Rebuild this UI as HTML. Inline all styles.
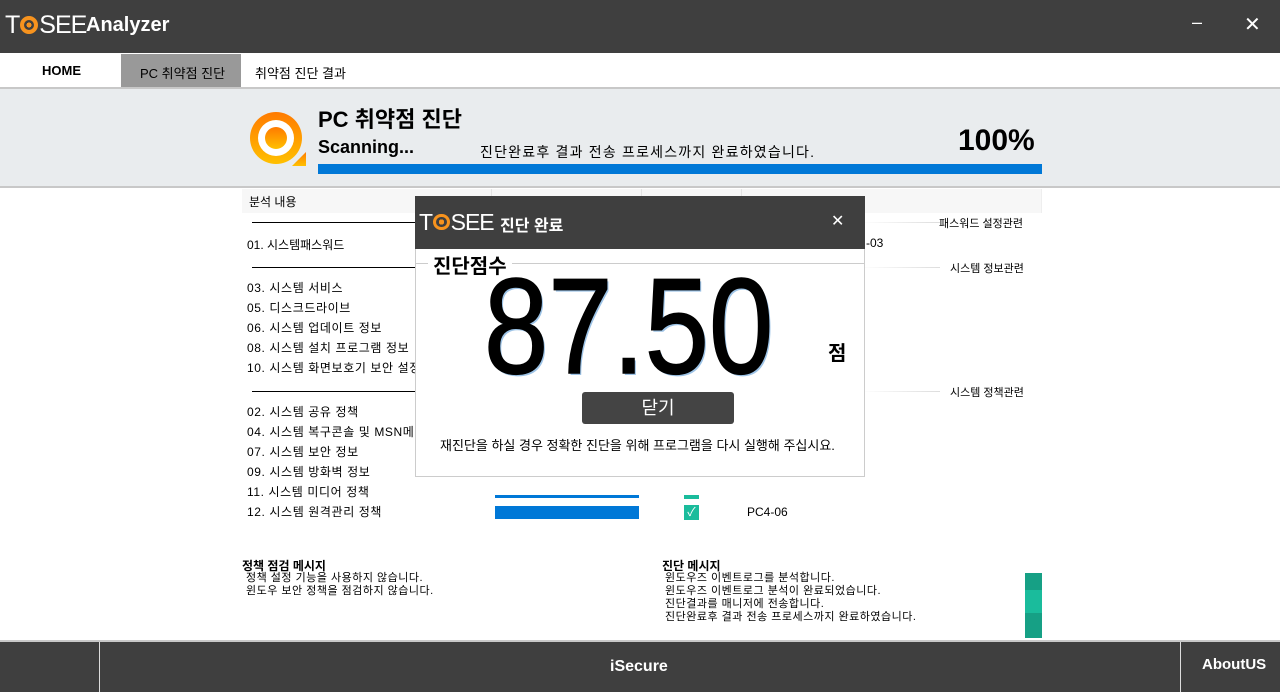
<!DOCTYPE html>
<html><head><meta charset="utf-8"><style>
*{margin:0;padding:0;box-sizing:border-box}
body{width:1280px;height:692px;overflow:hidden;position:relative;background:#fff;font-family:"Liberation Sans","Noto Sans CJK KR",sans-serif;color:#000}
.a{position:absolute;white-space:nowrap}
.t{font-size:12px}
.q{display:inline-block;width:0.72em;height:0.72em;border-radius:50%;border:0.16em solid #f7931e;background:radial-gradient(circle,#f7931e 0 35%,transparent 36%);vertical-align:-0.02em;margin:0 1px}
.line{position:absolute;height:1px;background:#000}
.fl{position:absolute;height:1px;background:linear-gradient(90deg,#fff,#ddd)}
</style></head><body>
<div class="a" style="left:0;top:0;width:1280px;height:53px;background:#3f3f3f"></div>
<div class="a" style="left:5px;top:11px;color:#fff;font-size:25px;letter-spacing:-1px">T<span class="q"></span>SEE</div>
<div class="a" style="left:86px;top:14px;color:#fff;font-size:20px;font-weight:bold">Analyzer</div>
<div class="a" style="left:1192px;top:12px;color:#fff;font-size:18px">–</div>
<div class="a" style="left:1244px;top:12px;color:#fff;font-size:20px">✕</div>
<div class="a" style="left:121px;top:54px;width:120px;height:33px;background:#999"></div>
<div class="a" style="left:42px;top:63px;font-size:13px;font-weight:bold">HOME</div>
<div class="a" style="left:140px;top:63px;font-size:13px">PC 취약점 진단</div>
<div class="a" style="left:255px;top:63px;font-size:13px">취약점 진단 결과</div>
<div class="a" style="left:0;top:87px;width:1280px;height:101px;background:#e9ecee;border-top:2px solid #c8c8c8;border-bottom:2px solid #c8c8c8"></div>
<svg class="a" style="left:248px;top:110px" width="60" height="58" viewBox="0 0 60 58"><defs><linearGradient id="g" x1="0" y1="0" x2="0" y2="1"><stop offset="0" stop-color="#ff7a00"/><stop offset="1" stop-color="#ffc000"/></linearGradient></defs><circle cx="28" cy="28" r="26" fill="url(#g)"/><circle cx="28" cy="28" r="18" fill="#fff"/><circle cx="28" cy="28" r="11" fill="url(#g)"/><polygon points="44,56 58,42 58,56" fill="url(#g)"/></svg>
<div class="a" style="left:318px;top:102px;font-size:22px;font-weight:bold">PC 취약점 진단</div>
<div class="a" style="left:318px;top:137px;font-size:18px;font-weight:bold">Scanning...</div>
<div class="a" style="left:480px;top:142px;font-size:14px;letter-spacing:1.2px">진단완료후 결과 전송 프로세스까지 완료하였습니다.</div>
<div class="a" style="left:958px;top:124px;font-size:30px;font-weight:bold">100%</div>
<div class="a" style="left:318px;top:164px;width:724px;height:10px;background:#0078d7"></div>
<div class="a" style="left:242px;top:189px;width:800px;height:24px;background:#f7f7f7;border-right:1px solid #eee"></div>
<div class="a" style="left:491px;top:189px;width:1px;height:24px;background:#e4e4e4"></div>
<div class="a" style="left:641px;top:189px;width:1px;height:24px;background:#e4e4e4"></div>
<div class="a" style="left:741px;top:189px;width:1px;height:24px;background:#e4e4e4"></div>
<div class="a t" style="left:249px;top:193px">분석 내용</div>
<div class="line" style="left:252px;top:222px;width:170px"></div><div class="fl" style="left:860px;top:222px;width:80px"></div>
<div class="a t" style="left:939px;top:215px;font-size:11px">패스워드 설정관련</div>
<div class="a t" style="left:247px;top:236px">01. 시스템패스워드</div>
<div class="a t" style="left:866px;top:236px">-03</div>
<div class="line" style="left:252px;top:267px;width:170px"></div><div class="fl" style="left:860px;top:267px;width:80px"></div>
<div class="a t" style="left:950px;top:260px;font-size:11px">시스템 정보관련</div>
<div class="a t" style="left:247px;top:278px;line-height:20px;letter-spacing:0.6px">03. 시스템 서비스<br>05. 디스크드라이브<br>06. 시스템 업데이트 정보<br>08. 시스템 설치 프로그램 정보<br>10. 시스템 화면보호기 보안 설정</div>
<div class="line" style="left:252px;top:391px;width:170px"></div><div class="fl" style="left:860px;top:391px;width:80px"></div>
<div class="a t" style="left:950px;top:384px;font-size:11px">시스템 정책관련</div>
<div class="a t" style="left:247px;top:402px;line-height:20px;letter-spacing:0.6px">02. 시스템 공유 정책<br>04. 시스템 복구콘솔 및 MSN메<br>07. 시스템 보안 정보<br>09. 시스템 방화벽 정보<br>11. 시스템 미디어 정책<br>12. 시스템 원격관리 정책</div>
<div class="a" style="left:495px;top:495px;width:144px;height:3px;background:#0078d7"></div>
<div class="a" style="left:495px;top:506px;width:144px;height:13px;background:#0078d7"></div>
<div class="a" style="left:684px;top:495px;width:15px;height:4px;background:#1abc9c"></div>
<div class="a" style="left:684px;top:505px;width:15px;height:15px;background:#1abc9c;color:#fff;font-size:12px;text-align:center;line-height:15px">✓</div>
<div class="a t" style="left:747px;top:505px">PC4-06</div>
<div class="a" style="left:242px;top:557px;font-size:12px;font-weight:bold">정책 점검 메시지</div>
<div class="a" style="left:246px;top:572px;font-size:11px;line-height:13px;letter-spacing:0.5px">정책 설정 기능을 사용하지 않습니다.<br>윈도우 보안 정책을 점검하지 않습니다.</div>
<div class="a" style="left:662px;top:557px;font-size:12px;font-weight:bold">진단 메시지</div>
<div class="a" style="left:665px;top:572px;font-size:11px;line-height:13px;letter-spacing:0.5px">윈도우즈 이벤트로그를 분석합니다.<br>윈도우즈 이벤트로그 분석이 완료되었습니다.<br>진단결과를 매니저에 전송합니다.<br>진단완료후 결과 전송 프로세스까지 완료하였습니다.</div>
<div class="a" style="left:1025px;top:573px;width:17px;height:65px;background:#16a085"></div>
<div class="a" style="left:1025px;top:590px;width:17px;height:23px;background:#1abc9c"></div>
<div class="a" style="left:0;top:640px;width:1280px;height:2px;background:#c8c8c8"></div>
<div class="a" style="left:0;top:642px;width:1280px;height:50px;background:#3f3f3f"></div>
<div class="a" style="left:99px;top:642px;width:1px;height:50px;background:#ddd"></div>
<div class="a" style="left:1180px;top:642px;width:1px;height:50px;background:#ddd"></div>
<div class="a" style="left:610px;top:658px;color:#fff;font-size:16px;font-weight:bold">iSecure</div>
<div class="a" style="left:1202px;top:656px;color:#fff;font-size:15px;font-weight:bold">AboutUS</div>
<!-- dialog -->
<div class="a" style="left:415px;top:196px;width:450px;height:53px;background:#3f3f3f"></div>
<div class="a" style="left:419px;top:209px;color:#fff;font-size:23px;letter-spacing:-1px">T<span class="q"></span>SEE</div>
<div class="a" style="left:500px;top:212px;color:#fff;font-size:16px;font-weight:bold">진단 완료</div>
<div class="a" style="left:831px;top:211px;color:#fff;font-size:16px">✕</div>
<div class="a" style="left:415px;top:249px;width:450px;height:228px;background:#fff;border:1px solid #ccc;border-top:none"></div>
<div class="a" style="left:416px;top:263px;width:448px;height:1px;background:#ccc"></div>
<div class="a" style="left:428px;top:250px;padding:0 5px;background:#fff;font-size:20px;font-weight:bold">진단점수</div>
<div class="a" style="left:484px;top:258px;font-size:136px;line-height:136px;text-shadow:2px 2px 0 #9dc3e6;transform:scaleX(0.85);transform-origin:0 0;-webkit-text-stroke:1.5px #000">87.50</div>
<div class="a" style="left:828px;top:337px;font-size:20px;font-weight:bold">점</div>
<div class="a" style="left:582px;top:392px;width:152px;height:32px;background:#444;border-radius:3px;color:#fff;font-size:18px;text-align:center;line-height:32px">닫기</div>
<div class="a" style="left:440px;top:435px;font-size:13px">재진단을 하실 경우 정확한 진단을 위해 프로그램을 다시 실행해 주십시요.</div>
</body></html>
